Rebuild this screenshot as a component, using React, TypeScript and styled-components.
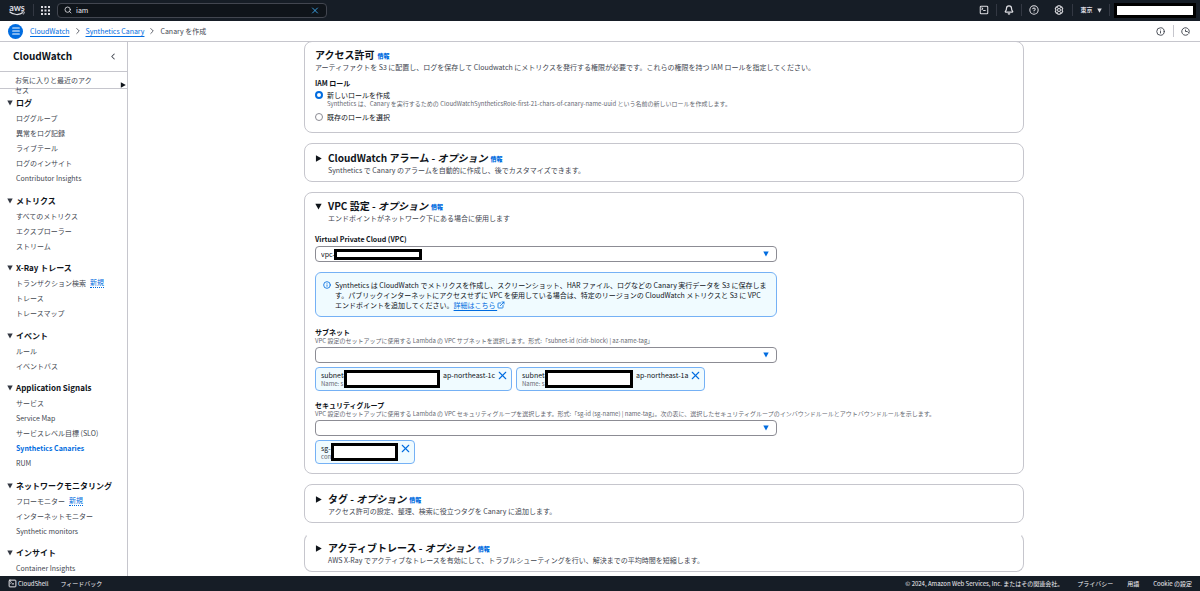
import React from 'react';
import styled, { createGlobalStyle } from 'styled-components';
import {
  Bell,
  ChevronLeft,
  ChevronRight,
  CircleHelp,
  ExternalLink,
  Info,
  Menu,
  Search,
  SquareTerminal,
  X,
} from 'lucide-react';

const GlobalStyle = createGlobalStyle`
  * { box-sizing: border-box; }
  body {
    margin: 0;
    background: #fff;
    color: #0f141a;
    font-family: "Noto Sans CJK JP", sans-serif;
    font-size: 7px;
    line-height: 10px;
  }
  button, input, select { font: inherit; color: inherit; margin: 0; padding: 0; }
  button { border: 0; background: none; cursor: pointer; }
  h1, h2, h3, p, ul, ol { margin: 0; padding: 0; font-weight: inherit; }
  li { list-style: none; }
`;

const Page = styled.div`
  display: flex;
  flex-direction: column;
  height: 100vh;
  overflow: hidden;
`;

/* Top navigation */
const TopBar = styled.header`
  display: flex;
  align-items: center;
  flex: none;
  height: 21px;
  padding: 0 4px 1px 9px;
  background: #161d26;
  color: #dedee3;
`;

const Logo = styled.a`
  display: flex;
  flex-direction: column;
  align-items: center;
  width: 16px;
  margin-right: 8px;
  color: #dedee3;
  font-family: Lato, sans-serif;
  font-size: 9px;
  font-weight: 700;
  line-height: 7px;
  text-decoration: none;
`;

const BarDivider = styled.span<{ $light?: boolean }>`
  width: 1px;
  height: 12px;
  background: ${(p) => (p.$light ? '#c6c6cd' : '#333843')};
`;

const IconButton = styled.button<{ $w?: number }>`
  display: flex;
  align-items: center;
  justify-content: center;
  flex: none;
  width: ${(p) => p.$w ?? 24}px;
  height: 14px;
`;

const SearchBox = styled.label`
  display: flex;
  align-items: center;
  gap: 4px;
  width: 270px;
  height: 15px;
  padding: 0 6px;
  border: 1px solid #424650;
  border-radius: 4px;
  background: #0f141a;
`;

const SearchInput = styled.input`
  flex: 1;
  min-width: 0;
  border: 0;
  outline: 0;
  background: none;
  color: #ebebf0;
`;

const BarRight = styled.div`
  display: flex;
  align-items: center;
  margin-left: auto;
`;

const Region = styled.button`
  display: flex;
  align-items: center;
  justify-content: center;
  gap: 4px;
  width: 36px;
  font-size: 6px;
  font-weight: 700;
`;

const Account = styled.div`
  margin-left: 4px;
`;

/* Opaque cover; it paints over any text that runs beneath it. */
const Redacted = styled.span<{ $w: number; $h: number }>`
  position: relative;
  display: block;
  flex: none;
  width: ${(p) => p.$w}px;
  height: ${(p) => p.$h}px;
  border: 3px solid #000;
  background: #fff;
`;

/* Breadcrumb bar */
const CrumbBar = styled.div`
  display: flex;
  align-items: center;
  flex: none;
  height: 21px;
  padding: 0 4px 0 8px;
  border-bottom: 1px solid #c6c6cd;
  color: #424650;
`;

const MenuButton = styled.button`
  display: flex;
  align-items: center;
  justify-content: center;
  width: 15px;
  height: 15px;
  margin-right: 7px;
  border-radius: 50%;
  background: #006ce0;
  color: #fff;
`;

const Crumbs = styled.ol`
  display: flex;
  align-items: center;
  gap: 3px;
  li { display: flex; align-items: center; gap: 3px; }
`;

const Link = styled.a`
  color: #006ce0;
  text-decoration: underline;
  text-underline-offset: 2px;
`;

/* Body */
const Body = styled.div`
  display: flex;
  flex: 1;
  min-height: 0;
`;

const Sidebar = styled.nav`
  flex: none;
  width: 128px;
  overflow: hidden;
  border-right: 1px solid #c6c6cd;
  color: #424650;
`;

const SideHeader = styled.div`
  display: flex;
  align-items: center;
  justify-content: space-between;
  height: 30px;
  padding: 0 9px 1px 13px;
  border-bottom: 1px solid #c6c6cd;
`;

const SideTitle = styled.h2`
  color: #0f141a;
  font-size: 10px;
  font-weight: 700;
`;

const Favorites = styled.button`
  display: flex;
  align-items: flex-start;
  justify-content: space-between;
  width: 100%;
  height: 17px;
  padding: 3px 1px 0 15px;
  border-bottom: 1px solid #c6c6cd;
  text-align: left;
  svg { margin-top: 7px; }
`;

const FavoritesText = styled.span`
  width: 80px;
`;

const Groups = styled.div`
  padding: 6px 0 0 7px;
`;

const Group = styled.section`
  margin-bottom: 7px;
  &:nth-child(odd) { margin-bottom: 8px; }
`;

const GroupTitle = styled.button`
  display: flex;
  align-items: center;
  gap: 3px;
  height: 15px;
  color: #0f141a;
  font-size: 8px;
  font-weight: 700;
`;

const NavItem = styled.li`
  display: flex;
  align-items: center;
  gap: 4px;
  height: 15px;
  padding-left: 9px;
`;

const NavLink = styled.a<{ $active?: boolean }>`
  color: ${(p) => (p.$active ? '#006ce0' : '#424650')};
  font-weight: ${(p) => (p.$active ? 700 : 400)};
  text-decoration: none;
`;

const NewTag = styled.button`
  color: #006ce0;
  line-height: 9px;
  border-bottom: 1px dotted #006ce0;
`;

const Main = styled.main`
  flex: 1;
  min-width: 0;
  overflow: hidden;
`;

/* The first card tucks its top edge under the breadcrumb bar's rule. */
const Form = styled.form`
  display: flex;
  flex-direction: column;
  gap: 10px;
  max-width: 720px;
  margin: -1px auto 0;
`;

const Card = styled.section<{ $form?: boolean; $openTop?: boolean }>`
  flex: none;
  padding: ${(p) => (p.$form ? '7px 10px 9px' : '8px 10px 6px')};
  border: 1px solid #c6c6cd;
  ${(p) => p.$openTop && 'border-top-color: transparent;'}
  border-radius: 8px;
`;

const CardHead = styled.div`
  display: flex;
  gap: 5px;
`;

const Toggle = styled.button`
  display: flex;
  align-items: center;
  width: 8px;
  height: 12px;
`;

const TitleRow = styled.div`
  display: flex;
  align-items: center;
  gap: 3px;
`;

const CardTitle = styled.h2`
  font-size: 10px;
  font-weight: 700;
  line-height: 12px;
`;

const InfoLink = styled.a`
  margin-top: 2px;
  color: #006ce0;
  font-size: 6px;
  font-weight: 900;
  text-decoration: none;
`;

const Description = styled.p`
  margin-top: 1px;
  color: #424650;
`;

const Field = styled.div<{ $gap: number }>`
  margin-top: ${(p) => p.$gap}px;
`;

const FieldLabel = styled.label`
  display: block;
  font-weight: 700;
  line-height: 10px;
`;

const Hint = styled.p`
  color: #656871;
  font-size: 6px;
  line-height: 8px;
`;

const RadioSet = styled.fieldset`
  margin: 6px 0 1px;
  padding: 0;
  border: 0;
  legend { padding: 0 0 2px; font-weight: 700; }
`;

const RadioRow = styled.label`
  display: flex;
  align-items: center;
  gap: 4px;
  height: 10px;
`;

const Radio = styled.input`
  appearance: none;
  width: 8px;
  height: 8px;
  margin: 0;
  border: 1px solid #8c8c94;
  border-radius: 50%;
  &:checked { border: 2px solid #006ce0; }
`;

const RadioHint = styled(Hint)`
  padding: 0 0 4px 12px;
`;

const SelectWrap = styled.div`
  position: relative;
  max-width: 462px;
  margin-top: 2px;
  svg {
    position: absolute;
    top: 5px;
    right: 8px;
    pointer-events: none;
  }
`;

const Select = styled.select`
  display: block;
  appearance: none;
  width: 100%;
  height: 16px;
  padding: 0 5px;
  border: 1px solid #8c8c94;
  border-radius: 4px;
  background: #fff;
`;

const SelectCover = styled.span`
  position: absolute;
  top: 3px;
  left: 19px;
`;

const Alert = styled.div`
  display: flex;
  gap: 4px;
  max-width: 462px;
  margin-top: 10px;
  padding: 7px 8px 6px 7px;
  border: 1px solid #75b1f5;
  border-radius: 6px;
  background: #f0fbff;
  > svg { flex: none; margin-top: 1px; color: #006ce0; }
  a svg { vertical-align: -1px; }
`;

const Tokens = styled.ul`
  display: flex;
  flex-wrap: wrap;
  gap: 4px;
  margin-top: 4px;
`;

const Token = styled.li`
  display: flex;
  align-items: flex-start;
  height: 24px;
  padding: 2px 2px 2px 5px;
  border: 1px solid #75b1f5;
  border-radius: 4px;
  background: #f0fbff;
`;

const TokenText = styled.div<{ $w: number }>`
  width: ${(p) => p.$w}px;
  white-space: nowrap;
`;

const Zone = styled.span`
  margin-left: 3px;
`;

const RemoveButton = styled.button`
  display: flex;
  margin: -1px 0 0 1px;
  color: #006ce0;
`;

/* Footer */
const Footer = styled.footer`
  display: flex;
  align-items: center;
  justify-content: space-between;
  flex: none;
  height: 15px;
  padding: 0 8px;
  background: #161d26;
  color: #f3f3f7;
  font-size: 6px;
`;

const FooterGroup = styled.div<{ $gap: number }>`
  display: flex;
  align-items: center;
  gap: ${(p) => p.$gap}px;
  a { color: inherit; text-decoration: none; }
  button { display: flex; align-items: center; gap: 1px; }
`;

const Down = ({ color = '#0f141a', size = 6 }: { color?: string; size?: number }) => (
  <svg width={size} height={size} viewBox="0 0 6 6" aria-hidden="true">
    <path d="M0.3 0.6h5.4L3 5.6z" fill={color} />
  </svg>
);

const Right = ({ size = 6 }: { size?: number }) => (
  <svg width={size} height={size} viewBox="0 0 6 6" aria-hidden="true">
    <path d="M0.8 0.2v5.6L5.8 3z" fill="#0f141a" />
  </svg>
);

const Recent = () => (
  <svg width="9" height="9" viewBox="0 0 24 24" fill="none" stroke="currentColor" strokeWidth="2.5" aria-hidden="true">
    <path d="M20 18A10 10 0 1 1 22 12v3" />
    <path d="M12 7v5h5l5 5" />
  </svg>
);

/* Gear drawn as a hexagonal nut with a hub */
const Gear = () => (
  <svg width="10" height="10" viewBox="0 0 24 24" fill="none" stroke="currentColor" strokeWidth="2.5" aria-hidden="true">
    <path d="M9.5 2h5l1 3 3-.5 2.5 4.5-2 3 2 3-2.5 4.5-3-.5-1 3h-5l-1-3-3 .5L3 15l2-3-2-3 2.5-4.500 3 .5z" />
    <circle cx="12" cy="12" r="3.5" />
  </svg>
);

type Item = { label: string; isNew?: boolean; active?: boolean };

const groups: { title: string; items: Item[] }[] = [
  {
    title: 'ログ',
    items: [
      { label: 'ロググループ' },
      { label: '異常をログ記録' },
      { label: 'ライブテール' },
      { label: 'ログのインサイト' },
      { label: 'Contributor Insights' },
    ],
  },
  {
    title: 'メトリクス',
    items: [{ label: 'すべてのメトリクス' }, { label: 'エクスプローラー' }, { label: 'ストリーム' }],
  },
  {
    title: 'X-Ray トレース',
    items: [{ label: 'トランザクション検索', isNew: true }, { label: 'トレース' }, { label: 'トレースマップ' }],
  },
  { title: 'イベント', items: [{ label: 'ルール' }, { label: 'イベントバス' }] },
  {
    title: 'Application Signals',
    items: [
      { label: 'サービス' },
      { label: 'Service Map' },
      { label: 'サービスレベル目標 (SLO)' },
      { label: 'Synthetics Canaries', active: true },
      { label: 'RUM' },
    ],
  },
  {
    title: 'ネットワークモニタリング',
    items: [
      { label: 'フローモニター', isNew: true },
      { label: 'インターネットモニター' },
      { label: 'Synthetic monitors' },
    ],
  },
  { title: 'インサイト', items: [{ label: 'Container Insights' }] },
];

function ExpandableHead({ title, text, open }: { title: string; text: string; open?: boolean }) {
  return (
    <CardHead>
      <Toggle type="button" aria-expanded={!!open} aria-label={title}>
        {open ? <Down size={7} /> : <Right size={7} />}
      </Toggle>
      <div>
        <TitleRow>
          <CardTitle>
            {title} - <em>オプション</em>
          </CardTitle>
          <InfoLink href="#info">情報</InfoLink>
        </TitleRow>
        <Description>{text}</Description>
      </div>
    </CardHead>
  );
}

function TokenItem(props: { id: string; name: string; textWidth: number; coverWidth: number; zone?: string }) {
  return (
    <Token>
      <TokenText $w={props.textWidth}>
        <p>{props.id}</p>
        <Hint>{props.name}</Hint>
      </TokenText>
      <Redacted $w={props.coverWidth} $h={18} />
      {props.zone && <Zone>{props.zone}</Zone>}
      <RemoveButton type="button" aria-label="削除">
        <X size={13} strokeWidth={2} />
      </RemoveButton>
    </Token>
  );
}

export default function App() {
  return (
    <>
      <GlobalStyle />
      <Page>
        <TopBar>
          <Logo href="#home">
            aws
            <svg width="16" height="5" viewBox="0 0 16 5" fill="none" stroke="#dedee3" aria-hidden="true">
              <path d="M0.5 0.8C4.5 4.3 10.5 4.3 14 1.6" strokeWidth="1.2" />
              <path d="M12.3 0.8c1.4-.4 2.9-.3 3 .1s-.3 1.7-1 2.6" strokeWidth="0.8" />
            </svg>
          </Logo>
          <BarDivider />
          <IconButton $w={23} aria-label="サービス">
            <svg width="9" height="9" viewBox="0 0 9 9" fill="#dedee3">
              {[0, 3.5, 7].map((y) => [0, 3.5, 7].map((x) => <rect key={`${x}-${y}`} x={x} y={y} width="2" height="2" />))}
            </svg>
          </IconButton>
          <SearchBox>
            <Search size={8} strokeWidth={2.5} />
            <SearchInput aria-label="検索" defaultValue="iam" />
            <IconButton $w={10} aria-label="クリア">
              <X size={13} strokeWidth={2} color="#42b4ff" />
            </IconButton>
          </SearchBox>
          <BarRight>
            <IconButton aria-label="CloudShell"><SquareTerminal size={10} strokeWidth={2.5} /></IconButton>
            <BarDivider />
            <IconButton aria-label="通知"><Bell size={10} strokeWidth={3} /></IconButton>
            <BarDivider />
            <IconButton aria-label="ヘルプ"><CircleHelp size={10} strokeWidth={2.5} /></IconButton>
            <IconButton $w={26} aria-label="設定"><Gear /></IconButton>
            <BarDivider />
            <Region>
              東京 <Down color="#dedee3" size={5} />
            </Region>
            <BarDivider />
            <Account>
              <Redacted $w={82} $h={15} />
            </Account>
          </BarRight>
        </TopBar>

        <CrumbBar>
          <MenuButton aria-label="メニュー"><Menu size={10} strokeWidth={2.5} /></MenuButton>
          <Crumbs>
            <li><Link href="#cw">CloudWatch</Link><ChevronRight size={10} strokeWidth={2} /></li>
            <li><Link href="#canary">Synthetics Canary</Link><ChevronRight size={10} strokeWidth={2} /></li>
            <li>Canary を作成</li>
          </Crumbs>
          <BarRight>
            <IconButton $w={25} aria-label="情報"><Info size={9} strokeWidth={2.5} /></IconButton>
            <BarDivider $light />
            <IconButton $w={22} aria-label="履歴"><Recent /></IconButton>
          </BarRight>
        </CrumbBar>

        <Body>
          <Sidebar>
            <SideHeader>
              <SideTitle>CloudWatch</SideTitle>
              <IconButton $w={10} aria-label="閉じる"><ChevronLeft size={11} strokeWidth={2.5} /></IconButton>
            </SideHeader>
            <Favorites>
              <FavoritesText>お気に入りと最近のアクセス</FavoritesText>
              <Right />
            </Favorites>
            <Groups>
              {groups.map((g) => (
                <Group key={g.title}>
                  <GroupTitle><Down color="#333843" />{g.title}</GroupTitle>
                  <ul>
                    {g.items.map((i) => (
                      <NavItem key={i.label}>
                        <NavLink href="#nav" $active={i.active}>{i.label}</NavLink>
                        {i.isNew && <NewTag>新規</NewTag>}
                      </NavItem>
                    ))}
                  </ul>
                </Group>
              ))}
            </Groups>
          </Sidebar>

          <Main>
            <Form>
              <Card $form>
                <TitleRow>
                  <CardTitle>アクセス許可</CardTitle>
                  <InfoLink href="#info">情報</InfoLink>
                </TitleRow>
                <Description>
                  アーティファクトを S3 に配置し、ログを保存して Cloudwatch にメトリクスを発行する権限が必要です。これらの権限を持つ IAM ロールを指定してください。
                </Description>
                <RadioSet>
                  <legend>IAM ロール</legend>
                  <RadioRow><Radio type="radio" name="role" defaultChecked />新しいロールを作成</RadioRow>
                  <RadioHint>
                    Synthetics は、Canary を実行するための CloudWatchSyntheticsRole-first-21-chars-of-canary-name-uuid という名前の新しいロールを作成します。
                  </RadioHint>
                  <RadioRow><Radio type="radio" name="role" />既存のロールを選択</RadioRow>
                </RadioSet>
              </Card>

              <Card>
                <ExpandableHead title="CloudWatch アラーム" text="Synthetics で Canary のアラームを自動的に作成し、後でカスタマイズできます。" />
              </Card>

              <Card $form>
                <ExpandableHead open title="VPC 設定" text="エンドポイントがネットワーク下にある場合に使用します" />
                <Field $gap={11}>
                  <FieldLabel htmlFor="vpc">Virtual Private Cloud (VPC)</FieldLabel>
                  <SelectWrap>
                    <Select id="vpc"><option>vpc-</option></Select>
                    <SelectCover><Redacted $w={88} $h={11} /></SelectCover>
                    <Down color="#006ce0" />
                  </SelectWrap>
                </Field>
                <Alert>
                  <Info size={8} strokeWidth={2.5} />
                  <p>
                    Synthetics は CloudWatch でメトリクスを作成し、スクリーンショット、HAR ファイル、ログなどの Canary 実行データを S3 に保存します。パブリックインターネットにアクセスせずに VPC を使用している場合は、特定のリージョンの CloudWatch メトリクスと S3 に VPC エンドポイントを追加してください。<Link href="#more">詳細はこちら <ExternalLink size={8} strokeWidth={2.5} /></Link>
                  </p>
                </Alert>
                <Field $gap={10}>
                  <FieldLabel htmlFor="subnet">サブネット</FieldLabel>
                  <Hint>VPC 設定のセットアップに使用する Lambda の VPC サブネットを選択します。形式:「subnet-id (cidr-block) | az-name-tag」</Hint>
                  <SelectWrap>
                    <Select id="subnet" />
                    <Down color="#006ce0" />
                  </SelectWrap>
                  <Tokens>
                    <TokenItem id="subnet-" name="Name: s" textWidth={23} coverWidth={96} zone="ap-northeast-1c" />
                    <TokenItem id="subnet-" name="Name: s" textWidth={23} coverWidth={88} zone="ap-northeast-1a" />
                  </Tokens>
                </Field>
                <Field $gap={9}>
                  <FieldLabel htmlFor="sg">セキュリティグループ</FieldLabel>
                  <Hint>
                    VPC 設定のセットアップに使用する Lambda の VPC セキュリティグループを選択します。形式:「sg-id (sg-name) | name-tag」。次の表に、選択したセキュリティグループのインバウンドルールとアウトバウンドルールを示します。
                  </Hint>
                  <SelectWrap>
                    <Select id="sg" />
                    <Down color="#006ce0" />
                  </SelectWrap>
                  <Tokens>
                    <TokenItem id="sg-" name="con" textWidth={10} coverWidth={67} />
                  </Tokens>
                </Field>
              </Card>

              <Card>
                <ExpandableHead title="タグ" text="アクセス許可の設定、整理、検索に役立つタグを Canary に追加します。" />
              </Card>

              <Card $openTop>
                <ExpandableHead
                  title="アクティブトレース"
                  text="AWS X-Ray でアクティブなトレースを有効にして、トラブルシューティングを行い、解決までの平均時間を短縮します。"
                />
              </Card>
            </Form>
          </Main>
        </Body>

        <Footer>
          <FooterGroup $gap={12}>
            <button><SquareTerminal size={9} strokeWidth={2.5} />CloudShell</button>
            <a href="#feedback">フィードバック</a>
          </FooterGroup>
          <FooterGroup $gap={14}>
            <span>© 2024, Amazon Web Services, Inc. またはその関連会社。</span>
            <a href="#privacy">プライバシー</a>
            <a href="#terms">用語</a>
            <a href="#cookie">Cookie の設定</a>
          </FooterGroup>
        </Footer>
      </Page>
    </>
  );
}
